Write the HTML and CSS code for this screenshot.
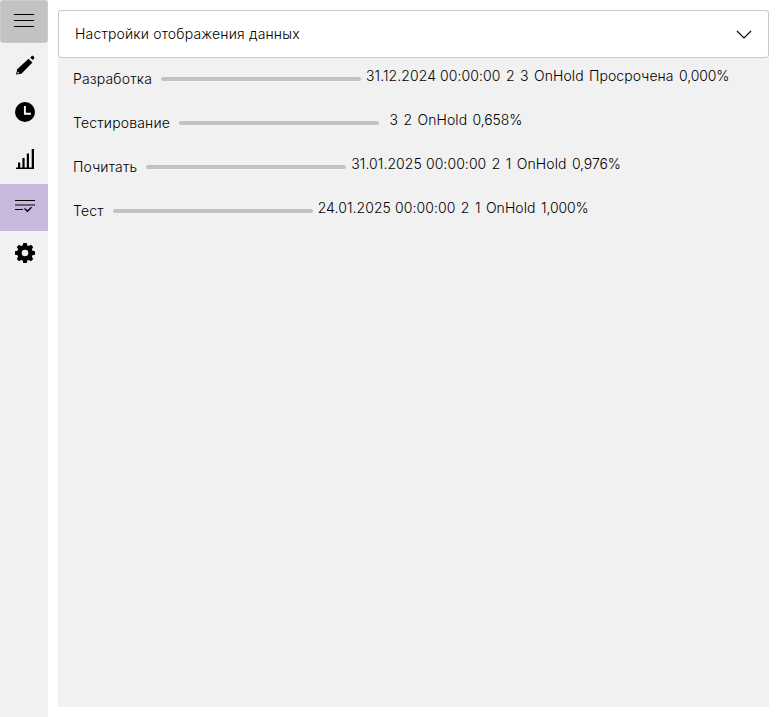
FILE: index.html
```html
<!DOCTYPE html>
<html lang="ru">
<head>
<meta charset="utf-8">
<title>Задачи</title>
<link rel="stylesheet" href="styles.css">
</head>
<body>
<nav class="sidebar">
  <button class="menu" aria-label="Меню"><svg width="20" height="15" viewBox="0 0 20 15"><path d="M0 1.5h20M0 7.5h20M0 13.5h20" stroke="#000" stroke-width="1.1"/></svg></button>
  <a class="item"><svg width="20" height="20" viewBox="0 0 20 20"><path d="M13.5 3.7l3.9 3.9L6.4 18.7 1 19.5l1.3-5.2z"/><path d="M15.2 2.7l1.5-1.6c.5-.5 1.1-.5 1.6 0l.7.8c.5.5.5 1.1 0 1.6l-1.2 1.6z"/><path d="M2.8 16.5l1.6 1.5-2 .6z" fill="#f1f1f1"/></svg></a>
  <a class="item"><svg width="20" height="20" viewBox="0 0 20 20"><circle cx="10" cy="10" r="10"/><path d="M9.9 4v7.8h6" fill="none" stroke="#fff" stroke-width="1.9"/></svg></a>
  <a class="item"><svg width="20" height="20" viewBox="0 0 20 20"><path d="M1 18.5h18V20H1zM3 13.5h2.2v5.5H3zM7.4 9h2.2v10H7.4zM11.8 4.5H14V19h-2.2zM16.7 0H19v19h-2.3z"/></svg></a>
  <a class="item active"><svg width="20" height="20" viewBox="0 0 20 20"><path d="M0 4.5h20M0 13.5h8" stroke="#000" stroke-width="1.1"/><path d="M0 9h20" stroke="#655c70" stroke-width="2"/><path d="M9.5 12.5l3 2.7 4-4" fill="none" stroke="#000" stroke-width="1.4"/></svg></a>
  <a class="item"><svg width="20" height="20" viewBox="0 0 20 20"><path fill-rule="evenodd" d="M8.3 0h3.4l.6 2.5 1.5.6L16 1.8 18.2 4l-1.3 2.2.6 1.5 2.5.6v3.4l-2.5.6-.6 1.5 1.3 2.2-2.2 2.2-2.2-1.3-1.5.6-.6 2.5H8.3l-.6-2.5-1.5-.6L4 18.2 1.8 16l1.3-2.2-.6-1.5L0 11.7V8.3l2.5-.6.6-1.5L1.8 4 4 1.8l2.2 1.3 1.5-.6zM10 6.7a3.3 3.3 0 1 0 0 6.6 3.3 3.3 0 0 0 0-6.6z"/></svg></a>
</nav>
<main class="content">
  <div class="expander"><span>Настройки отображения данных</span><svg width="16" height="9" viewBox="0 0 16 9"><path d="M1 1l7 7 7-7" fill="none" stroke="#000" stroke-width="1.2"/></svg></div>
  <ul class="tasks">
    <li class="task"><span class="name">Разработка</span><i class="bar"></i><div class="meta"><span>31.12.2024 00:00:00</span><span>2</span><span>3</span><span>OnHold</span><span>Просрочена</span><span>0,000%</span></div></li>
    <li class="task"><span class="name">Тестирование</span><i class="bar"></i><div class="meta"><span></span><span>3</span><span>2</span><span>OnHold</span><span>0,658%</span></div></li>
    <li class="task"><span class="name">Почитать</span><i class="bar"></i><div class="meta"><span>31.01.2025 00:00:00</span><span>2</span><span>1</span><span>OnHold</span><span>0,976%</span></div></li>
    <li class="task"><span class="name">Тест</span><i class="bar"></i><div class="meta"><span>24.01.2025 00:00:00</span><span>2</span><span>1</span><span>OnHold</span><span>1,000%</span></div></li>
  </ul>
</main>
</body>
</html>
```
FILE: styles.css
```css
* { box-sizing: border-box; }
body {
  margin: 0;
  display: flex;
  height: 717px;
  background: #fff;
  color: #000;
  font: 300 14px/18px Inter, sans-serif;
  letter-spacing: 0.17px;
}
svg { display: block; }
.sidebar { width: 48px; background: #f1f1f1; }
.menu {
  display: grid;
  place-items: center;
  width: 48px;
  height: 43px;
  padding: 0 0 2px;
  border: 1px solid #cbcbcb;
  border-radius: 3px;
  background: #c2c2c2;
}
.item {
  display: flex;
  justify-content: center;
  align-items: center;
  height: 47px;
  padding: 0 0 3px 2px;
}
.active { background: #c6b9dc; }
.content {
  flex: 1;
  margin: 10px;
  background: #f1f1f1;
}
.expander {
  display: flex;
  align-items: center;
  justify-content: space-between;
  height: 48px;
  padding: 0 16px;
  border: 1px solid #c8c8c8;
  border-radius: 3px;
  background: #fff;
}
.tasks { margin: 0; padding: 0 15px; list-style: none; }
.task { display: flex; height: 44px; padding-top: 9px; white-space: nowrap; }
.name { margin-top: 3px; }
.bar {
  width: 200px;
  height: 4px;
  margin: 10px 5px 0 9px;
  border-radius: 2px;
  background: #c2c2c2;
}
.meta { display: flex; gap: 5.4px; letter-spacing: 0.08px; }
.meta span:last-child { letter-spacing: -0.1px; }
```
